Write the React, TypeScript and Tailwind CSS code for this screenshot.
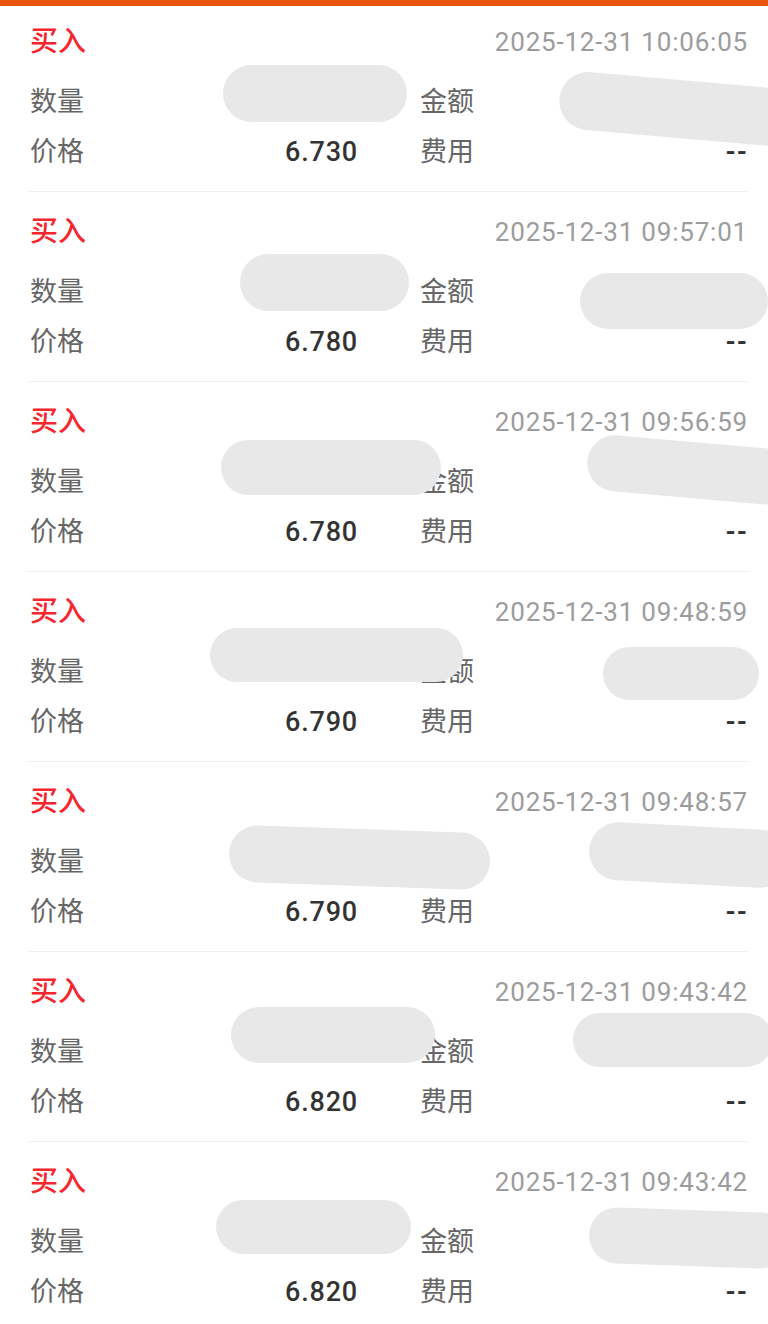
import React from "react";

type Blob = { l: number; t: number; w: number; h: number; r?: number };
type Rec = { date: string; price: string; blobs: Blob[] };

const records: Rec[] = [
  { date: "2025-12-31 10:06:05", price: "6.730", blobs: [{ l: 223, t: 59, w: 184, h: 57 }, { l: 559, t: 74, w: 240, h: 58, r: 5 }] },
  { date: "2025-12-31 09:57:01", price: "6.780", blobs: [{ l: 240, t: 62, w: 169, h: 57 }, { l: 580, t: 81, w: 188, h: 56 }] },
  { date: "2025-12-31 09:56:59", price: "6.780", blobs: [{ l: 221, t: 58, w: 220, h: 55 }, { l: 587, t: 60, w: 210, h: 56, r: 5 }] },
  { date: "2025-12-31 09:48:59", price: "6.790", blobs: [{ l: 210, t: 56, w: 253, h: 54 }, { l: 603, t: 75, w: 156, h: 53 }] },
  { date: "2025-12-31 09:48:57", price: "6.790", blobs: [{ l: 229, t: 67, w: 261, h: 57, r: 2 }, { l: 589, t: 64, w: 200, h: 58, r: 3 }] },
  { date: "2025-12-31 09:43:42", price: "6.820", blobs: [{ l: 231, t: 55, w: 204, h: 56 }, { l: 573, t: 61, w: 200, h: 54 }] },
  { date: "2025-12-31 09:43:42", price: "6.820", blobs: [{ l: 216, t: 58, w: 195, h: 54 }, { l: 589, t: 68, w: 200, h: 56, r: 2 }] },
];

const font = { fontFamily: "Roboto, 'Noto Sans CJK SC', sans-serif" };

function Record({ rec, first }: { rec: Rec; first: boolean }) {
  return (
    <div className="relative">
      <div className={`ml-[28px] mr-[20px] border-b border-[#f0f0f0] ${first ? "pt-[16px]" : "pt-[20px]"} pb-[14px]`}>
        <div className="flex h-[40px] items-center justify-between pl-[2px]">
          <span className="text-[28px] font-medium text-[#f5262d]">买入</span>
          <span className="text-[26px] tracking-[0.8px] text-[#9c9c9c]">{rec.date}</span>
        </div>
        <div className="mt-[15px] flex h-[50px] items-center">
          <div className="flex w-[330px] items-center justify-between pl-[2px]">
            <span className="text-[27px] text-[#666666]">数量</span>
          </div>
          <div className="ml-[62px] flex flex-1 items-center justify-between">
            <span className="text-[27px] text-[#666666]">金额</span>
          </div>
        </div>
        <div className="flex h-[50px] items-center">
          <div className="flex w-[330px] items-center justify-between pl-[2px]">
            <span className="text-[27px] text-[#666666]">价格</span>
            <span className="text-[27px] font-medium tracking-[0.8px] text-[#333333]">{rec.price}</span>
          </div>
          <div className="ml-[62px] flex flex-1 items-center justify-between">
            <span className="text-[27px] text-[#666666]">费用</span>
            <span className="text-[26px] font-bold tracking-[1px] text-[#333333]">--</span>
          </div>
        </div>
      </div>
      {rec.blobs.map((b, i) => (
        <div
          key={i}
          className="absolute rounded-full bg-[#e8e8e8]"
          style={{ left: b.l, top: b.t, width: b.w, height: b.h, transform: b.r ? `rotate(${b.r}deg)` : undefined }}
        />
      ))}
    </div>
  );
}

export default function App() {
  return (
    <div className="min-h-[1324px] w-[768px] overflow-hidden bg-white" style={font}>
      <div className="h-[6px] bg-[#e9560e]" />
      {records.map((r, i) => (
        <Record key={i} rec={r} first={i === 0} />
      ))}
    </div>
  );
}
